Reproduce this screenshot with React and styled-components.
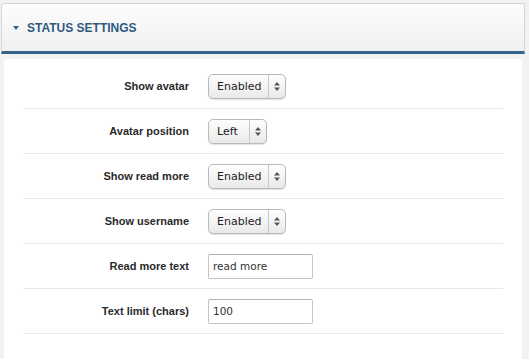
import React from 'react'
import styled, { createGlobalStyle } from 'styled-components'

const GlobalStyle = createGlobalStyle`
  html, body {
    margin: 0;
    padding: 0;
    background: #f2f2f2;
    font-family: "Liberation Sans", Arial, sans-serif;
  }
`

const Page = styled.div`
  width: 529px;
  height: 359px;
  overflow: hidden;
  padding-top: 3px;
  box-sizing: border-box;
`

const Header = styled.div`
  margin: 0 4px 0 1px;
  height: 51px;
  display: flex;
  align-items: center;
  gap: 8px;
  padding-left: 11px;
  border: 1px solid #d6d6d6;
  border-bottom: 3px solid #34628a;
  border-radius: 3px 3px 0 0;
  background: linear-gradient(#fdfdfd, #f0f0f0);
  box-sizing: border-box;
`

const Caret = styled.span`
  width: 0;
  height: 0;
  border-left: 3px solid transparent;
  border-right: 3px solid transparent;
  border-top: 4px solid #34628a;
  margin-top: 1px;
`

const Title = styled.h2`
  margin: 0;
  font-size: 12px;
  font-weight: bold;
  color: #2f5a7e;
`

const Panel = styled.div`
  margin: 5px 7px 0 4px;
  background: #fff;
  border-radius: 3px 3px 0 0;
  padding: 5px 19px 30px;
`

const Row = styled.div`
  display: grid;
  grid-template-columns: 166px 1fr;
  column-gap: 19px;
  align-items: center;
  height: 44px;
  border-bottom: 1px solid #e9e9e9;
`

const Label = styled.label`
  text-align: right;
  font-size: 11px;
  font-weight: bold;
  color: #2a2a2a;
`

const SelectBox = styled.div`
  width: ${p => p.$width}px;
  height: 25px;
  box-sizing: border-box;
  display: flex;
  border: 1px solid #b9b9b9;
  border-radius: 5px;
  background: linear-gradient(#fefefe, #e9e9e9);
  box-shadow: 0 1px 1px rgba(0, 0, 0, 0.12);
  font-family: "DejaVu Sans", sans-serif;
  font-size: 11px;
  color: #222;
`

const SelectText = styled.span`
  flex: 1;
  display: flex;
  align-items: center;
  padding-left: 8px;
`

const ArrowPart = styled.span`
  width: 16px;
  border-left: 1px solid #c8c8c8;
  display: flex;
  align-items: center;
  justify-content: center;
`

const TextInput = styled.input`
  width: 105px;
  height: 25px;
  box-sizing: border-box;
  border: 1px solid #c4c4c4;
  border-top-color: #b0b0b0;
  border-radius: 2px;
  padding: 0 0 0 4px;
  font-family: "DejaVu Sans", sans-serif;
  font-size: 10.5px;
  color: #333;
  background: #fff;
  outline: none;
`

function Arrows() {
  return (
    <svg width="6" height="9" viewBox="0 0 6 9">
      <path d="M3 0 L6 3.5 H0 Z M3 9 L6 5.5 H0 Z" fill="#555" />
    </svg>
  )
}

function Select({ value, width }) {
  return (
    <SelectBox $width={width}>
      <SelectText>{value}</SelectText>
      <ArrowPart>
        <Arrows />
      </ArrowPart>
    </SelectBox>
  )
}

const rows = [
  { label: 'Show avatar', select: 'Enabled', width: 78 },
  { label: 'Avatar position', select: 'Left', width: 59 },
  { label: 'Show read more', select: 'Enabled', width: 78 },
  { label: 'Show username', select: 'Enabled', width: 78 },
  { label: 'Read more text', input: 'read more' },
  { label: 'Text limit (chars)', input: '100' },
]

export default function App() {
  return (
    <Page>
      <GlobalStyle />
      <Header>
        <Caret />
        <Title>STATUS SETTINGS</Title>
      </Header>
      <Panel>
        {rows.map(r => (
          <Row key={r.label}>
            <Label>{r.label}</Label>
            {r.select ? (
              <Select value={r.select} width={r.width} />
            ) : (
              <TextInput type="text" defaultValue={r.input} />
            )}
          </Row>
        ))}
      </Panel>
    </Page>
  )
}
